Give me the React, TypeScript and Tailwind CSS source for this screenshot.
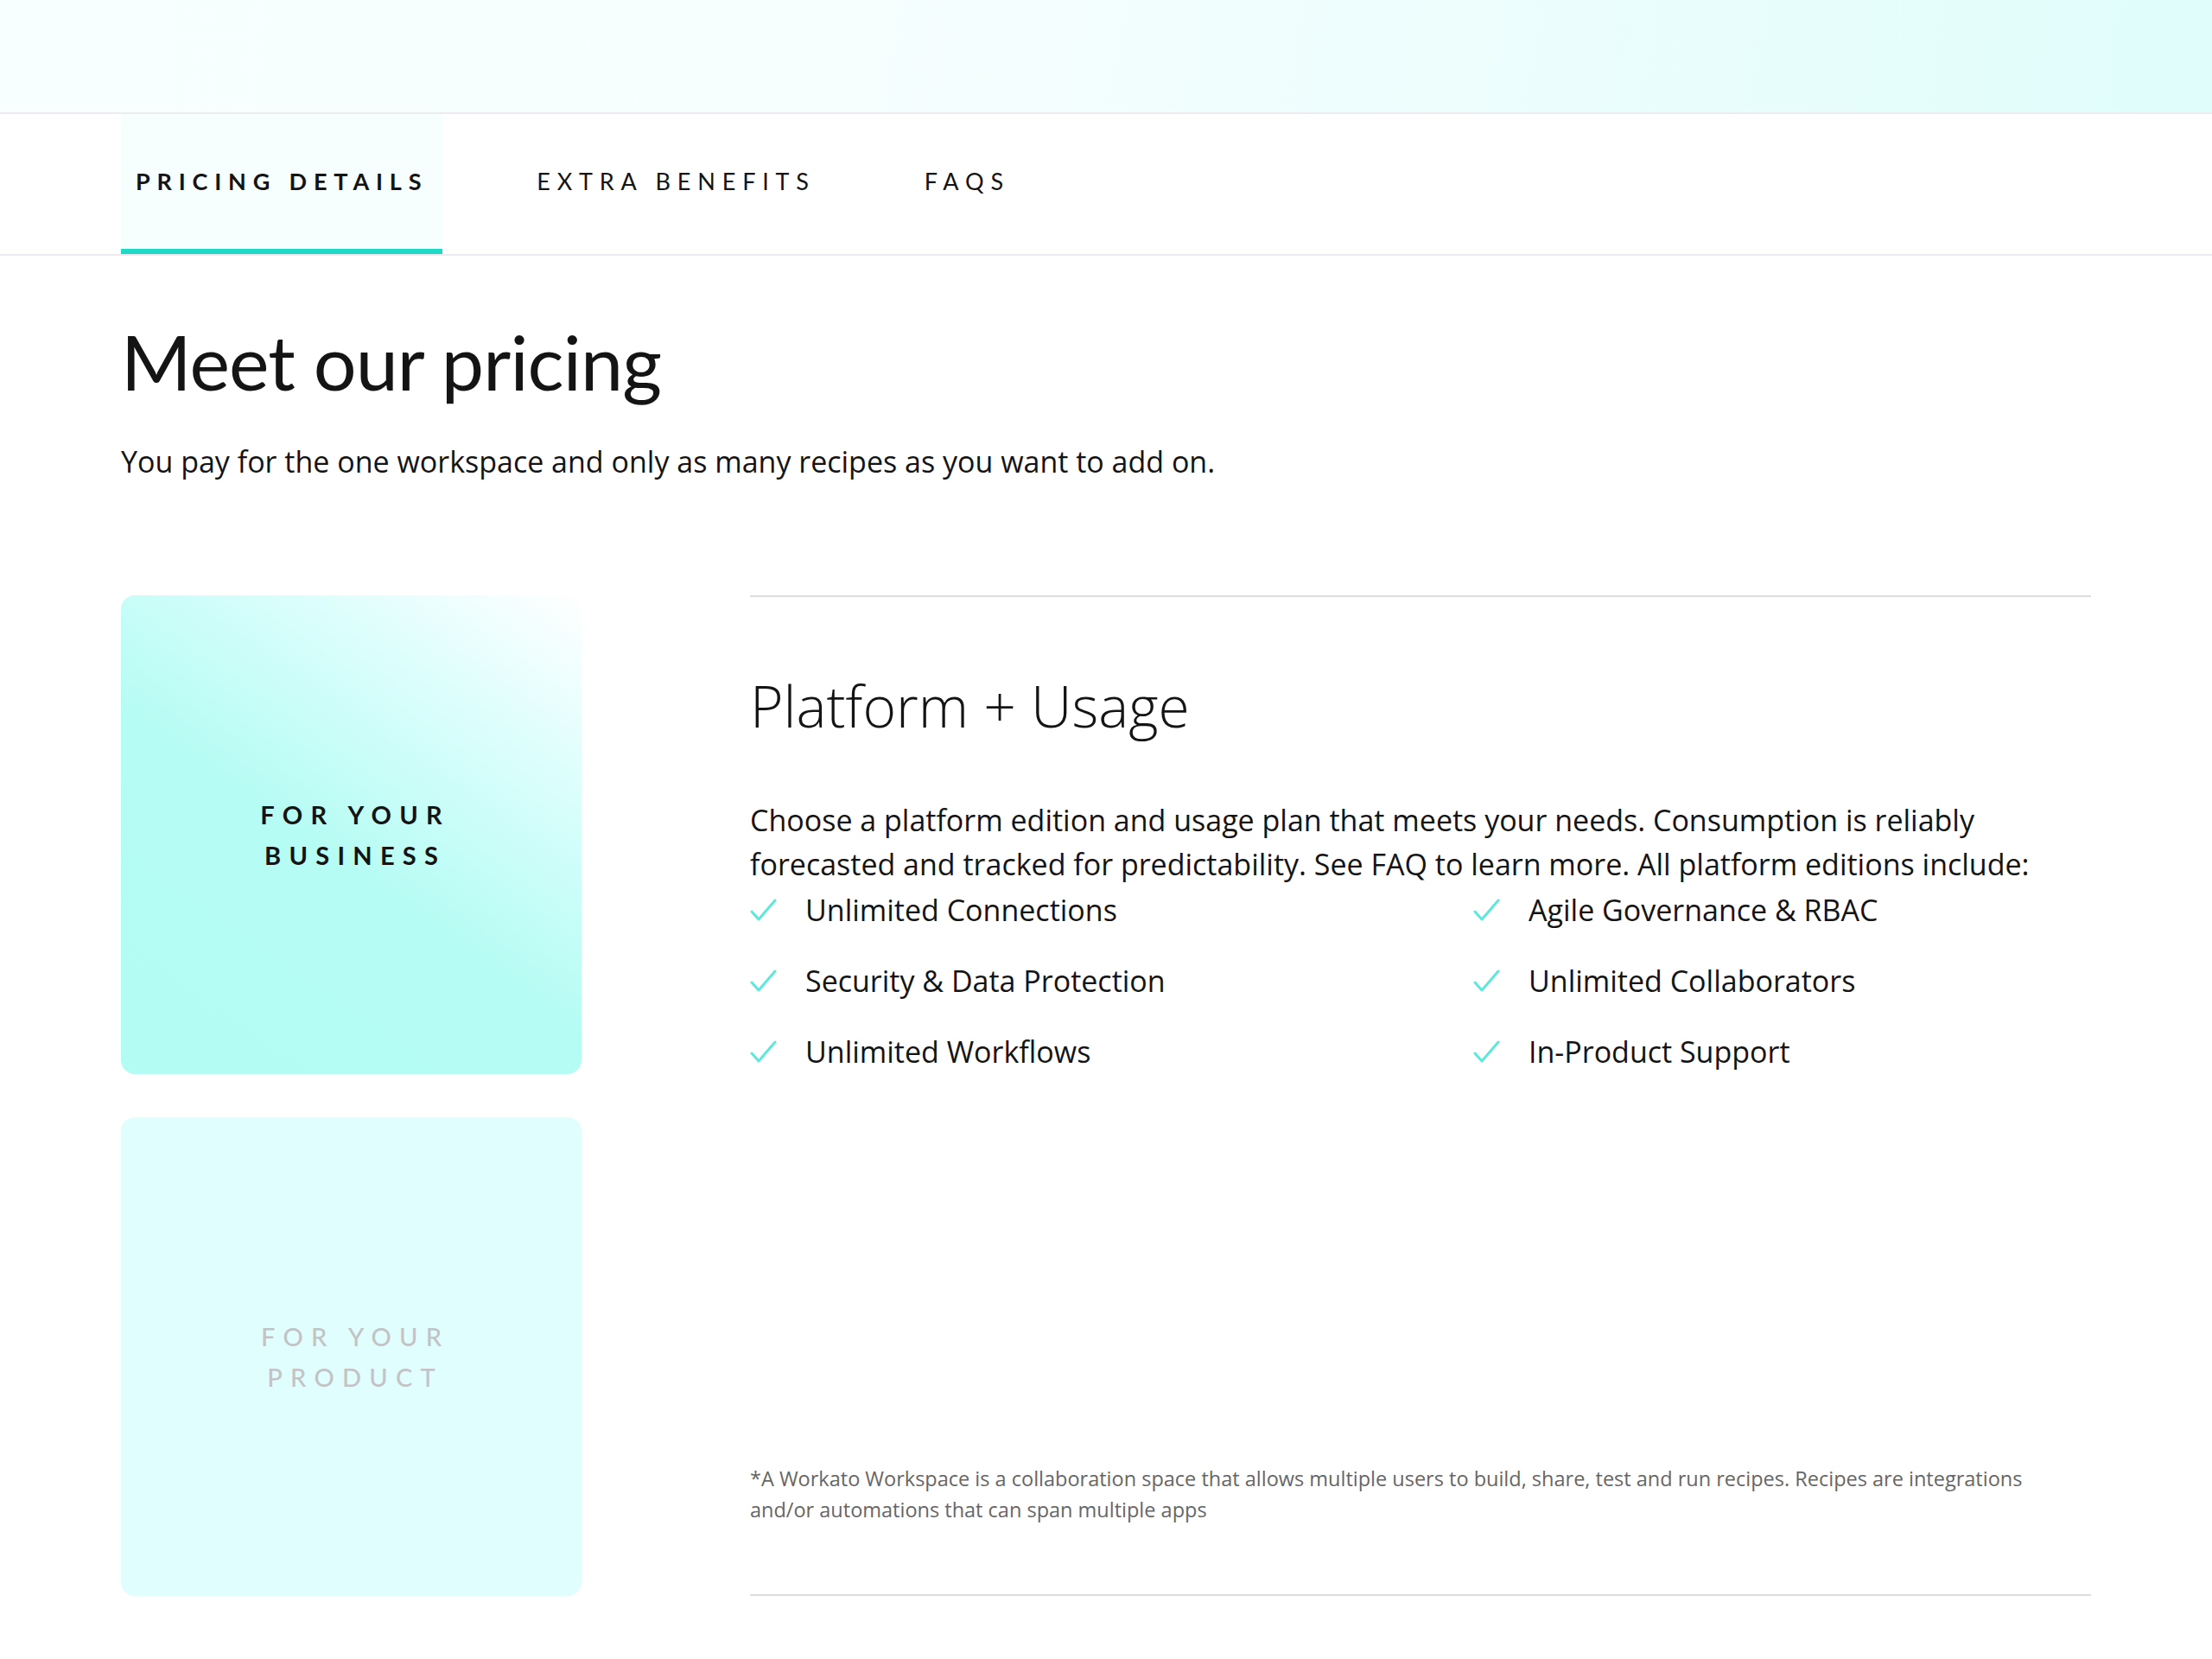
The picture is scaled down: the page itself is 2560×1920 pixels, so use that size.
const LATO = "font-['Lato','Liberation_Sans',sans-serif]"
const OPEN = "font-['Open_Sans','Liberation_Sans',sans-serif]"

const TABS = [
  { label: 'PRICING DETAILS', active: true },
  { label: 'EXTRA BENEFITS', active: false },
  { label: 'FAQS', active: false },
]

const FEATURES = [
  'Unlimited Connections',
  'Agile Governance & RBAC',
  'Security & Data Protection',
  'Unlimited Collaborators',
  'Unlimited Workflows',
  'In-Product Support',
]

function Check() {
  return (
    <svg width="31" height="27" viewBox="0 0 31 27" fill="none" className="shrink-0">
      <path d="M2 15 L10 24 L29 2" stroke="#5ee8dc" strokeWidth="3" strokeLinecap="round" strokeLinejoin="round" />
    </svg>
  )
}

export default function App() {
  return (
    <div className={`${LATO} min-h-screen w-full bg-white text-[#141414]`}>
      {/* top band */}
      <div className="h-[132px] w-full border-b-2 border-[#ececf0] bg-[linear-gradient(100deg,#f8ffff_0%,#f6fefe_40%,#e0fdfb_100%)]" />

      {/* tabs */}
      <nav className="flex h-[164px] items-stretch gap-[92px] border-b-2 border-[#ececf0] px-[140px]">
        {TABS.map((t) => (
          <div
            key={t.label}
            className={`flex items-center px-[17px] border-b-[6px] ${
              t.active ? 'border-[#1ed9c6] bg-[#f7fefe]' : 'border-transparent'
            }`}
          >
            <span
              className={`text-[27px] tracking-[0.29em] ${
                t.active ? 'font-bold' : 'font-normal'
              }`}
            >
              {t.label}
            </span>
          </div>
        ))}
      </nav>

      <main className="px-[140px] pt-[70px]">
        <h1 className="text-[88px] leading-[1.2] font-normal tracking-[-0.01em]">Meet our pricing</h1>
        <p className={`${OPEN} mt-[37px] text-[34px] leading-[1.5]`}>
          You pay for the one workspace and only as many recipes as you want to add on.
        </p>

        <div className="mt-[129px] flex gap-[195px]">
          {/* left cards */}
          <div className="flex w-[533px] shrink-0 flex-col gap-[50px]">
            <div className="flex h-[554px] items-center justify-center rounded-[16px] bg-[linear-gradient(35deg,#b2fcf3_0%,#b5fcf4_45%,#dbfefc_75%,#ffffff_100%)]">
              <p className="text-center text-[29px] font-bold leading-[47px] tracking-[0.32em] pl-[0.32em]">
                FOR YOUR
                <br />
                BUSINESS
              </p>
            </div>
            <div className="flex h-[554px] items-center justify-center rounded-[16px] bg-[#e0fefd]">
              <p className="text-center text-[29px] font-medium leading-[47px] tracking-[0.32em] pl-[0.32em] text-[#c3c3c6]">
                FOR YOUR
                <br />
                PRODUCT
              </p>
            </div>
          </div>

          {/* right details */}
          <section className={`${OPEN} flex flex-1 flex-col justify-between border-y-2 border-[#dcdcdc] pt-[86px] pb-[80px]`}>
            <div>
              <h2 className="text-[66px] font-light leading-[1.2]">Platform + Usage</h2>
              <p className="mt-[68px] text-[34px] leading-[51px]">
                Choose a platform edition and usage plan that meets your needs. Consumption is reliably
                forecasted and tracked for predictability. See FAQ to learn more. All platform editions include:
              </p>
              <ul className="-mt-[13px] grid grid-cols-[837px_1fr]">
                {FEATURES.map((f) => (
                  <li key={f} className="flex h-[82px] items-center gap-[33px]">
                    <Check />
                    <span className="text-[34px]">{f}</span>
                  </li>
                ))}
              </ul>
            </div>
            <p className="text-[23.5px] leading-[36px] text-[#666666]">
              *A Workato Workspace is a collaboration space that allows multiple users to build, share, test and run
              recipes. Recipes are integrations and/or automations that can span multiple apps
            </p>
          </section>
        </div>
      </main>
    </div>
  )
}
